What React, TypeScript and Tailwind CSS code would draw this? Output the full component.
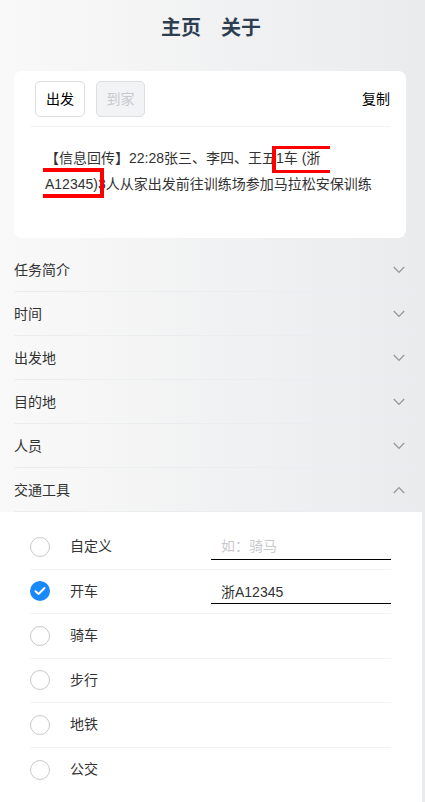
import { useState } from "react";

const font = "font-['Liberation_Sans','Noto_Sans_CJK_SC',sans-serif]";

const sections = ["任务简介", "时间", "出发地", "目的地", "人员", "交通工具"];

const vehicles = [
  { name: "自定义", input: true, placeholder: "如：骑马", value: "" },
  { name: "开车", input: true, placeholder: "", value: "浙A12345" },
  { name: "骑车" },
  { name: "步行" },
  { name: "地铁" },
  { name: "公交" },
];

const Chevron = ({ up }: { up?: boolean }) => (
  <svg
    width="12"
    height="8"
    viewBox="0 0 12 8"
    fill="none"
    stroke="#969799"
    strokeWidth="1.3"
    className={up ? "rotate-180" : ""}
  >
    <path d="M0.8 1 L6 6.4 L11.2 1" />
  </svg>
);

const Radio = ({ checked }: { checked: boolean }) =>
  checked ? (
    <span className="flex h-5 w-5 items-center justify-center rounded-full bg-[#1989fa]">
      <svg width="12" height="10" viewBox="0 0 12 10" fill="none">
        <path
          d="M1.5 5.2 L4.6 8 L10.5 2"
          stroke="white"
          strokeWidth="2"
          strokeLinecap="round"
          strokeLinejoin="round"
        />
      </svg>
    </span>
  ) : (
    <span className="h-5 w-5 rounded-full border border-[#c8c9cc] bg-white" />
  );

export default function App() {
  const [selected, setSelected] = useState("开车");
  const [open, setOpen] = useState("交通工具");

  return (
    <div
      className={`${font} min-h-screen bg-linear-to-r from-[#f9f9f9] to-[#eaebed] text-[#323233]`}
    >
      <div className="mr-[3px]">
        <div className="flex h-[56px] items-center justify-center gap-5 text-[20px] font-bold text-[#2c3e50]">
          <span>主页</span>
          <span>关于</span>
        </div>

        <div className="relative mt-[15px] mr-[16px] ml-[14px] rounded-lg bg-white px-4 pt-[10px] pb-[41px]">
          <div className="mb-[9px] flex h-9 items-center pl-[5px]">
            <button className="h-9 w-[50px] rounded-[5px] border border-[#dcdee0] bg-white text-[14px] text-black">
              出发
            </button>
            <button
              disabled
              className="ml-[11px] h-9 w-[49px] rounded-[5px] border border-[#dcdee0] bg-[#f2f3f5] text-[14px] text-[#c8c9cc]"
            >
              到家
            </button>
            <span className="ml-auto text-[14px] text-black">复制</span>
          </div>
          <div className="border-t border-[#f2f3f5]" />
          <p className="pt-[18px] pr-[13px] pl-[15px] text-[14px] leading-[26px] text-[#323233]">
            【信息回传】22:28张三、李四、王五1车 (浙A12345)3人从家出发前往训练场参加马拉松安保训练
          </p>

          {/* red annotation marks */}
          <div className="absolute top-[75px] left-[258px] h-[27px] w-[58px] border-t-[3px] border-b-[3px] border-l-4 border-[#ff0000]" />
          <div className="absolute top-[97px] left-[29px] h-[30px] w-[61px] border-t-4 border-r-4 border-b-4 border-[#ff0000]" />
        </div>

        <div className="mt-[10px]">
          {sections.map((s) => (
            <div key={s}>
              <div
                onClick={() => setOpen(open === s ? "" : s)}
                className="ml-[14px] flex h-[44px] cursor-pointer items-center justify-between border-b border-[#ebedf0] pr-[17px] text-[14px] leading-6"
              >
                <span>{s}</span>
                <Chevron up={open === s} />
              </div>
              {open === s && s === "交通工具" && (
                <div className="bg-white pt-[13px] pr-[31px] pb-[12px] pl-[30px]">
                  {vehicles.map((v, i) => (
                    <div
                      key={v.name}
                      onClick={() => setSelected(v.name)}
                      className={`flex h-[44.5px] items-center ${
                        i < vehicles.length - 1 ? "border-b border-[#f2f3f5]" : ""
                      }`}
                    >
                      <Radio checked={selected === v.name} />
                      <span className="ml-5 flex-1 text-[14px]">{v.name}</span>
                      {v.input && (
                        <input
                          defaultValue={v.value}
                          placeholder={v.placeholder}
                          className="h-[26px] w-[180px] border-b border-black px-[10px] text-[14px] text-[#323233] outline-none placeholder:text-[#c8c9cc]"
                        />
                      )}
                    </div>
                  ))}
                </div>
              )}
            </div>
          ))}
        </div>
      </div>
    </div>
  );
}
